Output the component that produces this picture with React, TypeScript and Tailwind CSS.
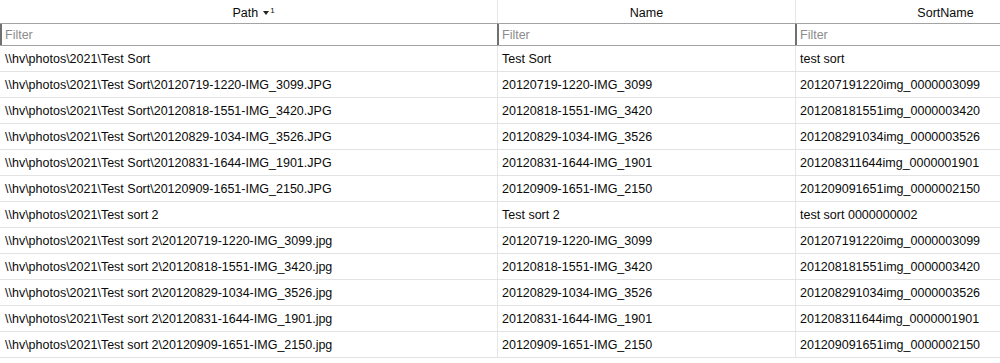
import React from "react";

const rows: [string, string, string][] = [
  ["\\\\hv\\photos\\2021\\Test Sort", "Test Sort", "test sort"],
  ["\\\\hv\\photos\\2021\\Test Sort\\20120719-1220-IMG_3099.JPG", "20120719-1220-IMG_3099", "201207191220img_0000003099"],
  ["\\\\hv\\photos\\2021\\Test Sort\\20120818-1551-IMG_3420.JPG", "20120818-1551-IMG_3420", "201208181551img_0000003420"],
  ["\\\\hv\\photos\\2021\\Test Sort\\20120829-1034-IMG_3526.JPG", "20120829-1034-IMG_3526", "201208291034img_0000003526"],
  ["\\\\hv\\photos\\2021\\Test Sort\\20120831-1644-IMG_1901.JPG", "20120831-1644-IMG_1901", "201208311644img_0000001901"],
  ["\\\\hv\\photos\\2021\\Test Sort\\20120909-1651-IMG_2150.JPG", "20120909-1651-IMG_2150", "201209091651img_0000002150"],
  ["\\\\hv\\photos\\2021\\Test sort 2", "Test sort 2", "test sort 0000000002"],
  ["\\\\hv\\photos\\2021\\Test sort 2\\20120719-1220-IMG_3099.jpg", "20120719-1220-IMG_3099", "201207191220img_0000003099"],
  ["\\\\hv\\photos\\2021\\Test sort 2\\20120818-1551-IMG_3420.jpg", "20120818-1551-IMG_3420", "201208181551img_0000003420"],
  ["\\\\hv\\photos\\2021\\Test sort 2\\20120829-1034-IMG_3526.jpg", "20120829-1034-IMG_3526", "201208291034img_0000003526"],
  ["\\\\hv\\photos\\2021\\Test sort 2\\20120831-1644-IMG_1901.jpg", "20120831-1644-IMG_1901", "201208311644img_0000001901"],
  ["\\\\hv\\photos\\2021\\Test sort 2\\20120909-1651-IMG_2150.jpg", "20120909-1651-IMG_2150", "201209091651img_0000002150"],
];

const font = "font-['Liberation_Sans',Arial,sans-serif] text-[12.5px] text-[#0a0a0a]";

export default function App() {
  return (
    <div className={`w-[1000px] h-[363px] bg-white overflow-hidden ${font}`}>
      <div className="w-[1100px]">
        {/* header */}
        <div className="flex h-[24px] border-b border-[#a3a3a3]">
          <div className="w-[498px] shrink-0 border-r border-[#e6e6e6] flex items-center justify-center pt-[3px]">
            <span className="pl-[10px]">Path</span>
            <span className="flex items-start ml-[5px] -mt-[3px]">
              <svg width="6" height="6" viewBox="0 0 6 6" className="mt-[3px]">
                <path d="M0 1 H6 L3 5 Z" fill="#222" />
              </svg>
              <span className="text-[8px] leading-none ml-[1px]">1</span>
            </span>
          </div>
          <div className="w-[298px] shrink-0 border-r border-[#e6e6e6] flex items-center justify-center pt-[3px]">
            Name
          </div>
          <div className="w-[297px] shrink-0 flex items-center justify-center pl-[2px] pt-[3px]">SortName</div>
        </div>
        {/* filter row */}
        <div className="flex h-[22px] border-b border-[#a3a3a3]">
          <div className="w-[497px] shrink-0 border-l-2 border-[#707070] flex items-center pl-[3px] pt-[2px] text-[#8c8c8c]">
            Filter
          </div>
          <div className="w-[298px] shrink-0 border-l-2 border-[#707070] flex items-center pl-[3px] pt-[2px] text-[#8c8c8c]">
            Filter
          </div>
          <div className="w-[300px] shrink-0 border-l-2 border-[#707070] flex items-center pl-[3px] pt-[2px] text-[#8c8c8c]">
            Filter
          </div>
        </div>
        {/* rows */}
        {rows.map((r, i) => (
          <div key={i} className="flex h-[26px] border-b border-[#e3e3e3]">
            <div className="w-[498px] shrink-0 border-r border-[#e6e6e6] flex items-center pl-[5px] pt-[2px] whitespace-nowrap">
              {r[0]}
            </div>
            <div className="w-[298px] shrink-0 border-r border-[#e6e6e6] flex items-center pl-[4px] pt-[2px] whitespace-nowrap">
              {r[1]}
            </div>
            <div className="w-[297px] shrink-0 flex items-center pl-[4px] pt-[2px] whitespace-nowrap">{r[2]}</div>
          </div>
        ))}
      </div>
    </div>
  );
}
